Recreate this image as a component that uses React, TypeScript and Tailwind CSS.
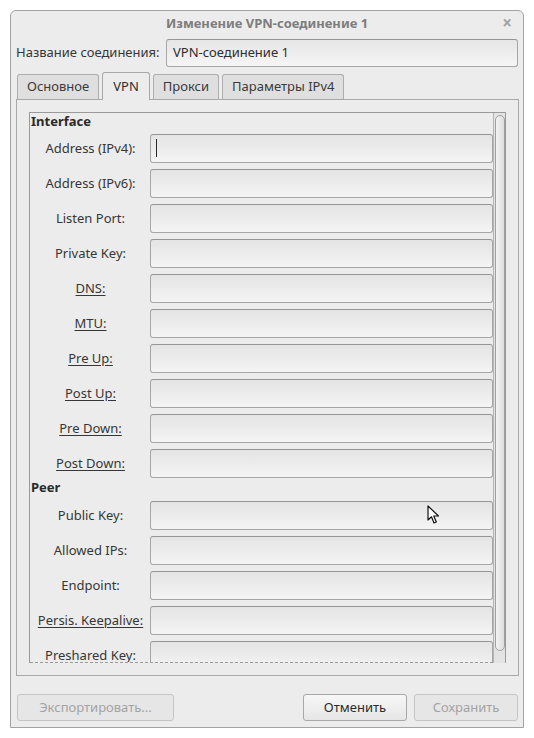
import React from "react";

const font = { fontFamily: '"Noto Sans", "DejaVu Sans", sans-serif' };

function Field({ caret = false }: { caret?: boolean }) {
  return (
    <div className="relative h-[29px] flex-1 rounded-[3px] border border-[#a6a6a6] border-t-[#959595] bg-gradient-to-b from-[#e4e4e4] to-[#f4f4f4]">
      {caret && <div className="absolute left-[5px] top-[4px] h-[18px] w-px bg-[#2a2a2a]" />}
    </div>
  );
}

function Row({ label, u = false, caret = false, mt = "mt-[6px]" }: { label: string; u?: boolean; caret?: boolean; mt?: string }) {
  return (
    <div className={`flex items-center ${mt}`}>
      <div className="w-[119px] text-center text-[13px] text-[#363636] leading-none">
        <span className={u ? "underline underline-offset-2" : ""}>{label}</span>
      </div>
      <div className="flex w-[343px]">
        <Field caret={caret} />
      </div>
    </div>
  );
}

function Tab({ label, active = false }: { label: string; active?: boolean }) {
  return (
    <div
      className={
        active
          ? "relative z-10 -mb-px flex h-[28px] items-center rounded-t-[3px] border border-b-0 border-[#a8a8a8] bg-[#ececec] px-[10px] text-[13px] text-[#2e2e2e]"
          : "mt-[2px] flex h-[25px] items-center rounded-t-[3px] border border-b-0 border-[#adadad] bg-[#dfdfdf] px-[9px] text-[13px] text-[#3a3a3a]"
      }
    >
      {label}
    </div>
  );
}

function Button({ label, disabled = false, w }: { label: string; disabled?: boolean; w: string }) {
  return (
    <div
      className={`${w} flex h-[27px] items-center justify-center rounded-[3px] border text-[13px] ${
        disabled
          ? "border-[#c4c4c4] bg-[#e6e6e6] text-[#a3a3a3]"
          : "border-[#a8a8a8] bg-gradient-to-b from-[#f7f7f7] to-[#e6e6e6] text-[#2c2c2c]"
      }`}
    >
      {label}
    </div>
  );
}

export default function App() {
  return (
    <div className="relative h-[738px] w-[534px] bg-white pl-[10px] pt-[10px]" style={font}>
      <div className="flex h-[718px] w-[514px] flex-col rounded-t-[6px] border border-[#a3a3a3] bg-[#ececec]">
        {/* title bar */}
        <div className="relative flex h-[26px] items-center justify-center">
          <span className="text-[13px] font-bold text-[#7d7d7d]">Изменение VPN-соединение 1</span>
          <span className="absolute right-[11px] top-[2px] text-[17px] font-bold leading-[20px] text-[#a3a3a3]">×</span>
        </div>
        {/* name row */}
        <div className="mt-[2px] flex items-center pl-[5px] pr-[5px]">
          <div className="w-[150px] text-[13px] text-[#363636]">Название соединения:</div>
          <div className="flex h-[28px] flex-1 items-center rounded-[3px] border border-[#a6a6a6] border-t-[#959595] bg-gradient-to-b from-[#e6e6e6] to-[#f5f5f5] pl-[6px] text-[13px] text-[#2e2e2e]">
            VPN-соединение 1
          </div>
        </div>
        {/* tabs */}
        <div className="mt-[5px] flex items-end gap-[3px] pl-[6px]">
          <Tab label="Основное" />
          <Tab label="VPN" active />
          <Tab label="Прокси" />
          <Tab label="Параметры IPv4" />
        </div>
        {/* panel */}
        <div className="ml-[5px] mr-[4px] h-[577px] border border-[#a8a8a8] bg-[#ececec] px-[12px] pb-[12px] pt-[12px]">
          <div className="flex h-[551px] border-l border-r border-t border-[#9a9a9a]">
            <div className="relative flex-1 overflow-hidden border-b border-dashed border-[#9a9a9a]">
              <div className="pl-[1px]">
                <div className="h-[21px] text-[13px] font-bold leading-[16px] text-[#2a2a2a]">Interface</div>
                <Row label="Address (IPv4):" caret mt="mt-0" />
                <Row label="Address (IPv6):" />
                <Row label="Listen Port:" />
                <Row label="Private Key:" />
                <Row label="DNS:" u />
                <Row label="MTU:" u />
                <Row label="Pre Up:" u />
                <Row label="Post Up:" u />
                <Row label="Pre Down:" u />
                <Row label="Post Down:" u />
                <div className="h-[23px] pt-[1px] text-[13px] font-bold leading-[16px] text-[#2a2a2a]">Peer</div>
                <Row label="Public Key:" mt="mt-0" />
                <Row label="Allowed IPs:" />
                <Row label="Endpoint:" />
                <Row label="Persis. Keepalive:" u />
                <Row label="Preshared Key:" u />
              </div>
            </div>
            {/* scrollbar */}
            <div className="w-[12px] border-l border-[#b5b5b5] bg-[#e3e3e3] pt-[2px]">
              <div className="mx-auto h-[536px] w-[10px] rounded-full border border-[#a0a0a0] bg-gradient-to-r from-[#f3f3f3] to-[#dedede]" />
            </div>
          </div>
        </div>
        {/* buttons */}
        <div className="mt-[18px] flex items-center pl-[6px] pr-[5px]">
          <Button label="Экспортировать..." disabled w="w-[157px]" />
          <div className="flex-1" />
          <Button label="Отменить" w="w-[104px]" />
          <div className="w-[7px]" />
          <Button label="Сохранить" disabled w="w-[104px]" />
        </div>
      </div>
      {/* mouse pointer */}
      <svg className="absolute left-[427px] top-[505px]" width="14" height="20" viewBox="0 0 14 20">
        <path d="M1 1 L1 15 L4.5 11.8 L7 18 L9.3 17 L6.8 11 L11.5 11 Z" fill="#ffffff" stroke="#111111" strokeWidth="1.2" strokeLinejoin="round" />
      </svg>
    </div>
  );
}
